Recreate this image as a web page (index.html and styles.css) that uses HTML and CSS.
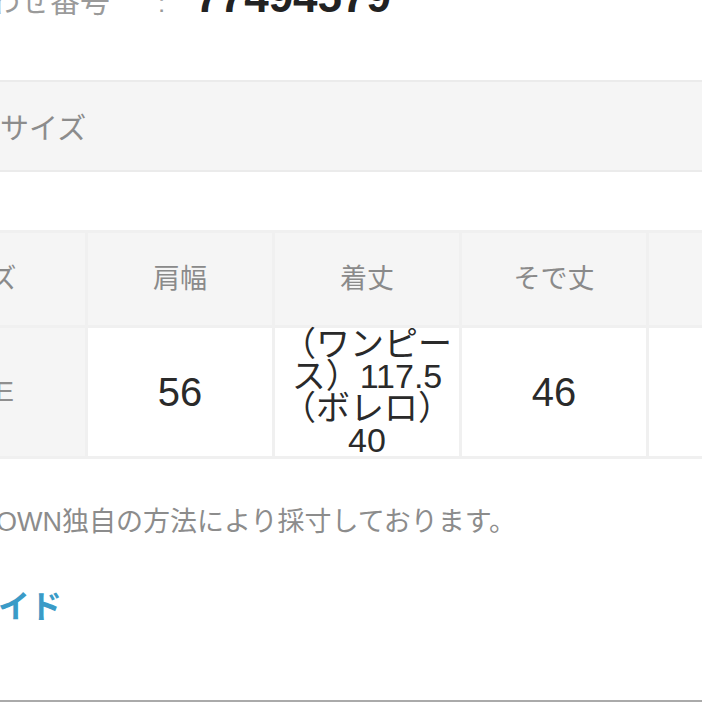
FILE: index.html
```html
<!DOCTYPE html>
<html lang="ja">
<head>
    <meta charset="UTF-8">
    <meta name="viewport" content="width=device-width, initial-scale=1.0">
    <title>サイズ</title>
    <link rel="stylesheet" href="styles.css">
</head>
<body>
    <!-- 問い合わせ番号 -->
    <div class="inquiry">
        <span class="inquiry-label">お問い合わせ番号</span>
        <span class="inquiry-colon">:</span>
        <span class="inquiry-number">77494579</span>
    </div>

    <!-- サイズ -->
    <h2 class="section-title">サイズ</h2>

    <table class="size-table">
        <colgroup>
            <col class="col-name">
            <col class="col-value">
            <col class="col-value">
            <col class="col-value">
            <col class="col-value">
        </colgroup>
        <thead>
            <tr>
                <th>サイズ</th>
                <th>肩幅</th>
                <th>着丈</th>
                <th>そで丈</th>
                <th>身幅</th>
            </tr>
        </thead>
        <tbody>
            <tr>
                <th>FREE</th>
                <td>56</td>
                <td class="multi">（ワンピース）117.5（ボレロ）40</td>
                <td>46</td>
                <td>58</td>
            </tr>
        </tbody>
    </table>

    <p class="note">ZOZOTOWN独自の方法により採寸しております。</p>

    <a href="#" class="guide-link">サイズガイド</a>

    <div class="bottom-line"></div>
</body>
</html>
```

FILE: styles.css
```css
body {
    font-family: "Liberation Sans", "Noto Sans CJK JP", sans-serif;
    margin: 0;
    padding: 0;
    background-color: #fff;
    overflow: hidden;
}
.inquiry {
    display: flex;
    align-items: baseline;
    height: 44px;
    margin-top: -25px;
    margin-left: -130px;
    white-space: nowrap;
}
.inquiry-label {
    font-family: "Noto Sans CJK JP", sans-serif;
    font-size: 30px;
    color: #9a9a9a;
    line-height: 44px;
}
.inquiry-colon {
    font-size: 26px;
    color: #999;
    margin: 0 30px 0 48px;
}
.inquiry-number {
    font-size: 44px;
    line-height: 44px;
    font-weight: bold;
    color: #222;
}
.section-title {
    margin: 61px 0 0 0;
    height: 88px;
    line-height: 88px;
    background-color: #f5f5f5;
    border-top: 2px solid #ebebeb;
    border-bottom: 2px solid #ebebeb;
    font-family: "Noto Sans CJK JP", sans-serif;
    font-size: 29px;
    font-weight: normal;
    color: #8c8c8c;
}
.size-table {
    margin-top: 58px;
    margin-left: -135px;
    border-collapse: collapse;
    table-layout: fixed;
    width: 968px;
}
.col-name {
    width: 220px;
}
.col-value {
    width: 187px;
}
.size-table th,
.size-table td {
    border: 3px solid #f0f0f0;
    text-align: center;
    padding: 0 8px;
}
.size-table thead th {
    height: 86px;
    padding-bottom: 6px;
    background-color: #f5f5f5;
    font-family: "Noto Sans CJK JP", sans-serif;
    font-size: 27px;
    font-weight: normal;
    color: #8a8a8a;
}
.size-table tbody th {
    background-color: #f5f5f5;
    font-size: 28px;
    font-weight: normal;
    color: #8f8f8f;
}
.size-table tbody td {
    background-color: #fff;
    font-size: 40px;
    color: #2a2a2a;
    height: 128px;
}
.size-table td.multi {
    font-size: 34px;
    line-height: 32px;
    padding: 0 4px;
}
.note {
    margin: 45px 0 0 -95px;
    font-family: "Liberation Sans", "Noto Sans CJK JP", sans-serif;
    font-size: 27px;
    line-height: 36px;
    color: #8c8c8c;
    white-space: nowrap;
}
.guide-link {
    display: block;
    margin: 44px 0 0 -129px;
    font-family: "Noto Sans CJK JP", sans-serif;
    font-size: 32px;
    line-height: 40px;
    font-weight: bold;
    color: #3a9bc7;
    text-decoration: none;
}
.bottom-line {
    margin-top: 76px;
    border-top: 2px solid #aaa;
}
```
